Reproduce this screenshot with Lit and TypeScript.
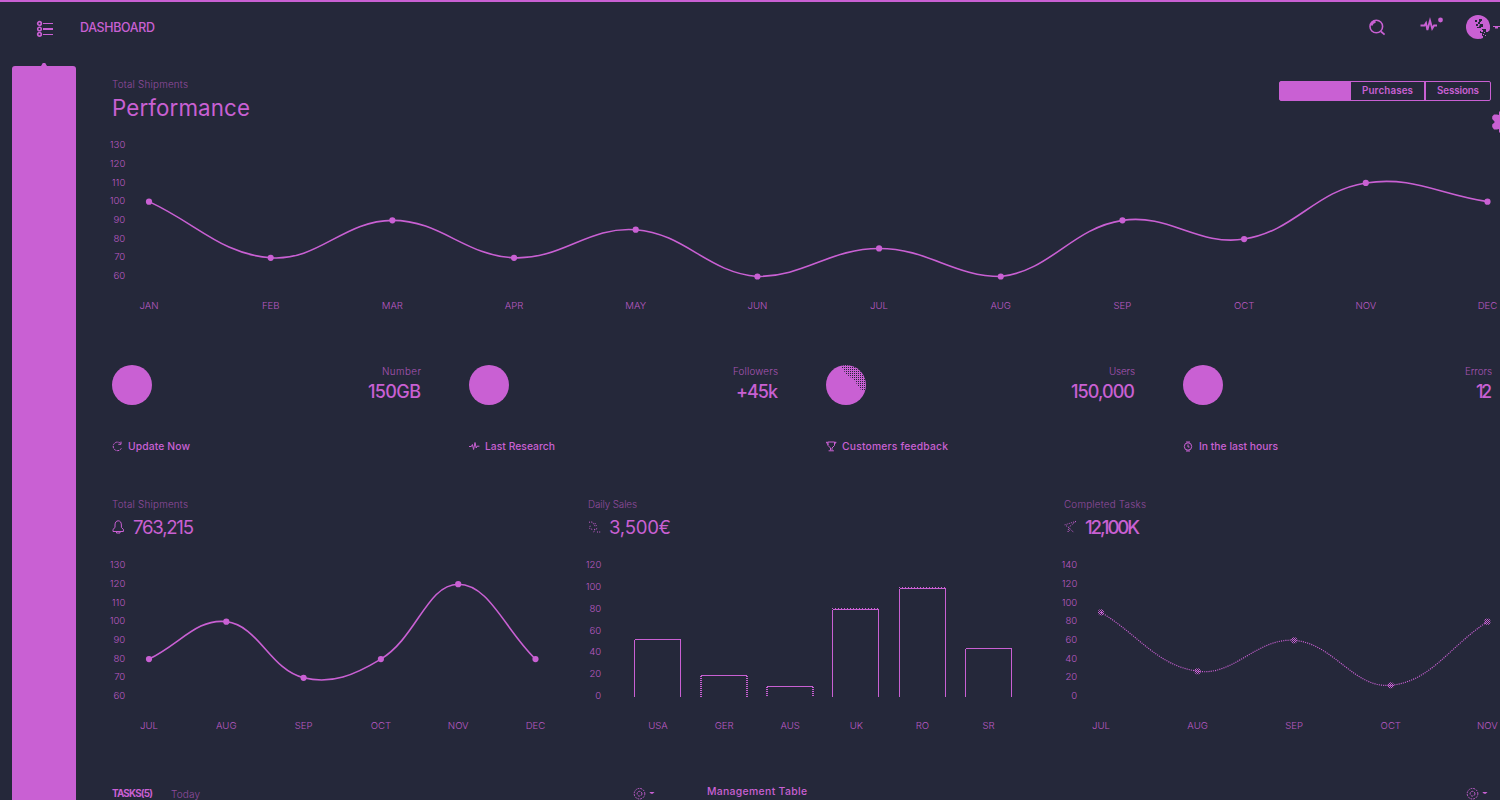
import { LitElement, html, css, svg } from "lit";
import { customElement, property } from "lit/decorators.js";

type Pt = { x: number; y: number };

/* Smooth line through the points, control points kept inside the plot. */
function smooth(p: Pt[], top: number, bottom: number, tension = 0.4): string {
  const clamp = (v: number) => Math.max(top, Math.min(bottom, v));
  const cps = p.map((c, i) => {
    const a = p[i - 1] ?? c;
    const b = p[i + 1] ?? c;
    const d0 = Math.hypot(c.x - a.x, c.y - a.y);
    const d1 = Math.hypot(b.x - c.x, b.y - c.y);
    const f0 = (tension * d0) / (d0 + d1);
    const f1 = (tension * d1) / (d0 + d1);
    return {
      px: c.x - f0 * (b.x - a.x), py: clamp(c.y - f0 * (b.y - a.y)),
      nx: c.x + f1 * (b.x - a.x), ny: clamp(c.y + f1 * (b.y - a.y)),
    };
  });
  let d = `M${p[0].x} ${p[0].y}`;
  for (let i = 1; i < p.length; i++) {
    d += `C${cps[i - 1].nx} ${cps[i - 1].ny} ${cps[i].px} ${cps[i].py} ${p[i].x} ${p[i].y}`;
  }
  return d;
}

/* A line of text whose letters are spread over a given width. */
@customElement("fit-text")
class FitText extends LitElement {
  static styles = css`
    :host { display: block; flex: none; white-space: pre; }
    .t { display: inline-block; }
  `;
  @property({ type: Number }) w = 0;
  @property() text = "";
  render() {
    return html`<span class="t">${this.text}</span>`;
  }
  updated() {
    const el = this.renderRoot.querySelector(".t") as HTMLElement;
    el.style.letterSpacing = "0px";
    const natural = el.getBoundingClientRect().width;
    el.style.letterSpacing = `${(this.w - natural) / Math.max(1, this.text.length - 1)}px`;
    this.style.width = `${this.w}px`;
  }
}

@customElement("data-chart")
class DataChart extends LitElement {
  static styles = css`
    :host { display: block; height: 180px; }
    svg { display: block; overflow: visible; }
    text { font: 300 9.6px Inter, sans-serif; fill: #c960d3; opacity: .9; }
    .line { fill: none; stroke: #c960d3; stroke-width: 1.6; }
    .dot { fill: #c960d3; }
    .k-faint .line { stroke-width: 1.2; stroke-dasharray: 1.1 1.1; }
    .k-faint .dot { fill: url(#dither); }
    .bar { fill: none; stroke: #c960d3; stroke-width: 1; shape-rendering: crispEdges; }
    .soft { stroke-dasharray: 1 1; stroke-width: 2; }
  `;
  @property({ attribute: false }) labels: string[] = [];
  @property({ attribute: false }) values: number[] = [];
  @property({ attribute: false }) ticks: number[] = [];
  @property({ type: Number }) first = 37;
  @property({ type: Number }) step = 77.3;
  @property() kind = "line";
  @property({ type: Number }) span = 428;

  render() {
    const top = 9.5;
    const bottom = 140.5;
    const max = this.ticks[0];
    const min = this.ticks[this.ticks.length - 1];
    const y = (v: number) => bottom - ((v - min) / (max - min)) * (bottom - top);
    const pts = this.values.map((v, i) => ({ x: this.first + i * this.step, y: y(v) }));
    return html`<svg width=${this.span} height="180" class="k-${this.kind}">
      <defs>
        <pattern id="dither" width="2" height="2" patternUnits="userSpaceOnUse">
          <rect width="1" height="1" fill="#c960d3" /><rect x="1" y="1" width="1" height="1" fill="#c960d3" />
        </pattern>
      </defs>
      ${this.ticks.map((t) => svg`<text x="13.3" y=${y(t) + 2.6} text-anchor="end">${t}</text>`)}
      ${this.labels.map((l, i) => svg`<text x=${this.first + i * this.step} y="173" text-anchor="middle">${l}</text>`)}
      ${this.kind === "bar" ? this.bars(pts) : svg`
        <path class="line" d=${smooth(pts, top, bottom)} />
        ${pts.map((p) => svg`<circle class="dot" cx=${p.x} cy=${p.y} r="3.1" />`)}`}
    </svg>`;
  }

  bars(pts: Pt[]) {
    return pts.map((p, i) => {
      const x = Math.round(p.x - 23.8) + 0.5;
      const t = Math.floor(p.y + 0.8) + 0.5;
      const soft = i === 1 || i === 2;
      const dotted = i === 3 || i === 4;
      return svg`
        <path class="bar" d="M${x} ${t}H${x + 46.5}" />
        <path class="bar ${soft ? "soft" : ""}" d="M${x} ${t}V140.5M${x + 46} ${t}V140.5" />
        ${dotted ? svg`<path class="bar" stroke-dasharray="1 2" d="M${x - 0.5} ${t - 1}H${x + 46.5}" />` : ""}`;
    });
  }
}

const icons: Record<string, unknown> = {
  refresh: svg`<path d="M8.5 2.3A4.3 4.3 0 1 0 9.3 7.4" stroke-dasharray="2.4 .7"/><path d="M6.3 3.3H9V.6"/>`,
  pulse: svg`<path d="M0 5.5H2.3L3.4 3.5 4.6 8.5 6 1.5 7.2 7 8 5.2H10.4"/>`,
  trophy: svg`<path d="M2 1H8.5V4.5L6 7V9.3M4.5 9.3V7L2 4.5V1M0 1.3H2M.4 1.3 2.2 4M8.5 1.3H10.3M9.8 1.3 8.2 4M2.6 9.8H7.9"/>`,
  watch: svg`<path d="M3 1H7M3 10H7"/><circle cx="5" cy="5.5" r="3.7"/><path d="M5 3.5V6H6.5"/>`,
  bell: svg`<path d="M3 7.5V5C3 2.2 4.4 .8 6.2 .8S9.4 2.2 9.4 5V7.5L11.4 9.4V11.5H1V9.4L3 7.5"/><path d="M4.5 11.8V13H8V11.8"/>`,
  delivery: svg`<path d="M1 2.2 4.5 2 7.2 6.8M2.2 5.8 1.6 8.3 5 9.8M7 3.2 9 7.2M6 9.5 9.8 8.5M5.6 12.2 7 9.6M9 12H12.4" stroke-dasharray="1 1.2"/>`,
  send: svg`<path d="M12 1.3 .8 4.9 4.7 7.4 9.8 12.6M12 1.3 4.7 7.4 4 12 6.6 9.2" stroke-dasharray="1 1.2"/>`,
};

@customElement("app-root")
class AppRoot extends LitElement {
  static styles = css`
    :host {
      display: block; width: 1500px; height: 800px; overflow: hidden;
      background: #25283a; color: #c960d3; font-family: Inter, sans-serif;
      border-top: 2px solid #c960d3; box-sizing: border-box;
    }
    svg { display: block; flex: none; overflow: visible; }
    .ic { fill: none; stroke: #c960d3; stroke-width: 1; }
    .top { height: 64px; display: flex; align-items: flex-start; padding-left: 36px; box-sizing: border-box; }
    .menu { margin-top: 18px; }
    .brand { margin: 16px auto 0 27px; font-size: 12.4px; line-height: 20px; font-weight: 500; }
    .tools { display: flex; width: 134px; margin-top: 12px; }
    .body { display: flex; height: 734px; }
    .side { position: relative; flex: none; width: 64px; margin-left: 12px; background: #c960d3; border-radius: 3px 3px 0 0; }
    .notch { position: absolute; left: 29px; top: -3px; width: 6px; height: 3px; background: #c960d3; clip-path: polygon(30% 0, 70% 0, 100% 100%, 0 100%); }
    .main { flex: none; width: 1380px; margin-left: 36px; padding-top: 14px; }
    .head { display: flex; justify-content: space-between; height: 56px; }
    .cap { font-size: 9.8px; line-height: 10px; font-weight: 300; opacity: .65; }
    h1 { margin: 5px 0 0; font-size: 22.3px; line-height: 25px; font-weight: 400; }
    .right { width: 213px; }
    .tabs { display: flex; width: 212px; height: 20px; margin-top: 1px; box-sizing: border-box; border: 1px solid #c960d3; border-radius: 2px; }
    .tab { display: flex; align-items: center; justify-content: center; font-size: 9.8px; line-height: 18px; font-weight: 600; box-sizing: border-box; }
    .on { width: 71px; background: #c960d3; }
    .mid { width: 75px; border-right: 2px solid #c960d3; }
    .end { flex: 1; }
    .cog { margin: 10px 0 0 213px; }
    .stats { display: grid; grid-template-columns: repeat(4, 309px); column-gap: 48px; margin-top: 49px; }
    .stat { display: flex; justify-content: space-between; }
    .num { display: flex; flex-direction: column; align-items: flex-end; }
    .num .cap { margin-top: 2px; opacity: .8; }
    .big { font-size: 18px; line-height: 20px; font-weight: 500; margin-top: 5px; }
    .foot { display: flex; gap: 6px; align-items: center; height: 14px; margin: 34px 0 1px; font-size: 10.3px; line-height: 14px; font-weight: 500; }
    .charts { display: grid; grid-template-columns: repeat(3, 428px); column-gap: 48px; margin-top: 46px; }
    .val { display: flex; align-items: center; height: 20px; margin: 7px 0 19px; gap: 8px; font-size: 18.6px; line-height: 20px; font-weight: 400; }
    .val .w { font-weight: 500; }
    .bottom { display: flex; align-items: flex-start; margin-top: 52px; font-size: 10.4px; line-height: 12px; }
    .tasks { display: flex; width: 595px; }
    .b { font-weight: 700; font-size: 9.8px; }
    .today { margin: 0 auto 0 18px; font-weight: 300; opacity: .65; font-size: 10px; }
    .tasks .gear { margin-right: 52px; }
    .table { display: flex; flex: 1; }
    .mt { margin: -2px auto 0 0; font-weight: 500; }
    .table .gear { margin-right: 4px; }
  `;

  gear() {
    return svg`<g class="ic">
      <circle cx="6.5" cy="5.7" r="5.3" stroke-dasharray="1.7 1.1"/><circle cx="6.5" cy="5.7" r="2.4" stroke-dasharray="2 1"/></g>
      <path d="M16.3 4H21.5L19.8 5.8H18Z" fill="#c960d3"/>`;
  }

  disc(i: number) {
    return html`<svg width="40" height="40"><defs>
      <pattern id="holes" width="2" height="2" patternUnits="userSpaceOnUse"><rect width="1" height="1" fill="#25283a"/></pattern>
      <clipPath id="disc"><circle cx="20" cy="20" r="20"/></clipPath></defs>
      <circle cx="20" cy="20" r="20" fill="#c960d3"/>
      ${i === 2 ? svg`<path clip-path="url(#disc)" d="M14 0H40V25H35L28 15 20 9Z" fill="url(#holes)"/>` : ""}
    </svg>`;
  }

  render() {
    const stats: [string, number, string, number, string, string, number][] = [
      ["Number", 39, "150GB", 53, "refresh", "Update Now", 62],
      ["Followers", 45, "+45k", 42, "pulse", "Last Research", 70],
      ["Users", 26, "150,000", 64, "trophy", "Customers feedback", 106],
      ["Errors", 27, "12", 16, "watch", "In the last hours", 79],
    ];
    const charts: any[] = [
      { t: "Total Shipments", tw: 76, icon: "bell", v: "763,215", vw: 61, labels: ["JUL", "AUG", "SEP", "OCT", "NOV", "DEC"], values: [80, 100, 70, 80, 120, 80], ticks: [130, 120, 110, 100, 90, 80, 70, 60], first: 37, step: 77.3, kind: "line" },
      { t: "Daily Sales", tw: 49, icon: "delivery", v: "3,500€", vw: 62, labels: ["USA", "GER", "AUS", "UK", "RO", "SR"], values: [53, 20, 10, 80, 100, 45], ticks: [120, 100, 80, 60, 40, 20, 0], first: 70, step: 66.1, kind: "bar" },
      { t: "Completed Tasks", tw: 82, icon: "send", v: "12,100K", vw: 55, labels: ["JUL", "AUG", "SEP", "OCT", "NOV"], values: [90, 27, 60, 12, 80], ticks: [140, 120, 100, 80, 60, 40, 20, 0], first: 37, step: 96.6, kind: "faint" },
    ];
    return html`
      <div class="top">
        <svg class="menu" width="17" height="17"><g class="ic">
          <circle cx="3.5" cy="3.5" r="1.8" stroke-width="1.7"/><circle cx="3.5" cy="9" r="1.8" stroke-width="1.5"/><circle cx="3.5" cy="14.3" r="1.8" stroke-width="1.7"/></g>
          <path d="M7 3H17V4H7ZM7 8H17V10H7ZM7 14H17V15H7Z" fill="#c960d3"/></svg>
        <fit-text class="brand" w="75" text="DASHBOARD"></fit-text>
        <div class="tools"><svg width="134" height="32">
          <g class="ic"><circle cx="10.3" cy="12.5" r="6.3" stroke-width="1.6"/><path d="M5.3 11.5A5.2 5.2 0 0 1 9.5 7.5" stroke-width="2.4"/><path d="M15 17.5 18.6 20.6" stroke-width="1.7"/>
          <path d="M54.5 11.5H58.5L60 9 61.4 16 64 6.5 66.2 14.5 68 11.5H71" stroke-width="1.9"/></g>
          <circle cx="74.5" cy="6" r="2.4" fill="#c960d3"/>
          <circle cx="112" cy="13" r="12" fill="#c960d3"/>
          <path d="M116 15H120V17H124V26H114V22H116V19H114V17H116ZM109 6H111V8H109ZM113 5H116V8H114V10H112V8H113ZM110 10H112V12H110ZM114 10H117V13H115V14H111V13H113Z" fill="#25283a"/>
          <path d="M115 16H117V18H115ZM118 18H119V19H118ZM117 20H118V21H117ZM120 17H122V18H120ZM119 21H120V22H119ZM115 7H116V8H115ZM120 14H124L122 18H120ZM114 22H117V24L114 25Z" fill="#c960d3"/>
          <path d="M127 12H134V13H132V14.4H129V13H127Z" fill="#c960d3"/>
        </svg></div>
      </div>
      <div class="body">
        <div class="side"><div class="notch"></div></div>
        <div class="main">
          <div class="head">
            <div><fit-text class="cap" w="76" text="Total Shipments"></fit-text>
              <h1><fit-text w="138" text="Performance"></fit-text></h1></div>
            <div class="right">
              <div class="tabs"><div class="tab on"></div>
                <div class="tab mid"><fit-text w="51" text="Purchases"></fit-text></div>
                <div class="tab end"><fit-text w="42" text="Sessions"></fit-text></div></div>
              <svg class="cog" width="20" height="22"><path d="M7 .5H13V4L15 5 18 4 20 8 18 11 20 14 18 18 15 17 13 18V21.5H7V18L5 18.5H2L.2 16V13.5L2.5 11.5V10.5L.2 8V5.5L2 3.5H5L7 4Z" fill="#c960d3"/></svg>
            </div>
          </div>
          <data-chart .labels=${["JAN", "FEB", "MAR", "APR", "MAY", "JUN", "JUL", "AUG", "SEP", "OCT", "NOV", "DEC"]}
            .values=${[100, 70, 90, 70, 85, 60, 75, 60, 90, 80, 110, 100]}
            .ticks=${[130, 120, 110, 100, 90, 80, 70, 60]} first="37" step="121.68" span="1380"></data-chart>
          <div class="stats">${stats.map(([l, lw, v, vw, ic, f, fw], i) => html`<div>
            <div class="stat">${this.disc(i)}<div class="num">
              <fit-text class="cap" .w=${lw} .text=${l}></fit-text><fit-text class="big" .w=${vw} .text=${v}></fit-text></div></div>
            <div class="foot"><svg class="ic" width="10" height="11">${icons[ic]}</svg><fit-text .w=${fw} .text=${f}></fit-text></div>
          </div>`)}</div>
          <div class="charts">${charts.map((c) => html`<div>
            <fit-text class="cap" .w=${c.tw} .text=${c.t}></fit-text>
            <div class="val"><svg class="ic" width="13" height="15">${icons[c.icon]}</svg><fit-text class=${c.kind === "faint" ? "w" : ""} .w=${c.vw} .text=${c.v}></fit-text></div>
            <data-chart .labels=${c.labels} .values=${c.values} .ticks=${c.ticks} .first=${c.first} .step=${c.step} .kind=${c.kind}></data-chart>
          </div>`)}</div>
          <div class="bottom">
            <div class="tasks"><fit-text class="b" w="41" text="TASKS(5)"></fit-text><fit-text class="today" w="29" text="Today"></fit-text>
              <svg class="gear" width="22" height="13">${this.gear()}</svg></div>
            <div class="table"><fit-text class="mt" w="100" text="Management Table"></fit-text>
              <svg class="gear" width="22" height="13">${this.gear()}</svg></div>
          </div>
        </div>
      </div>`;
  }
}
